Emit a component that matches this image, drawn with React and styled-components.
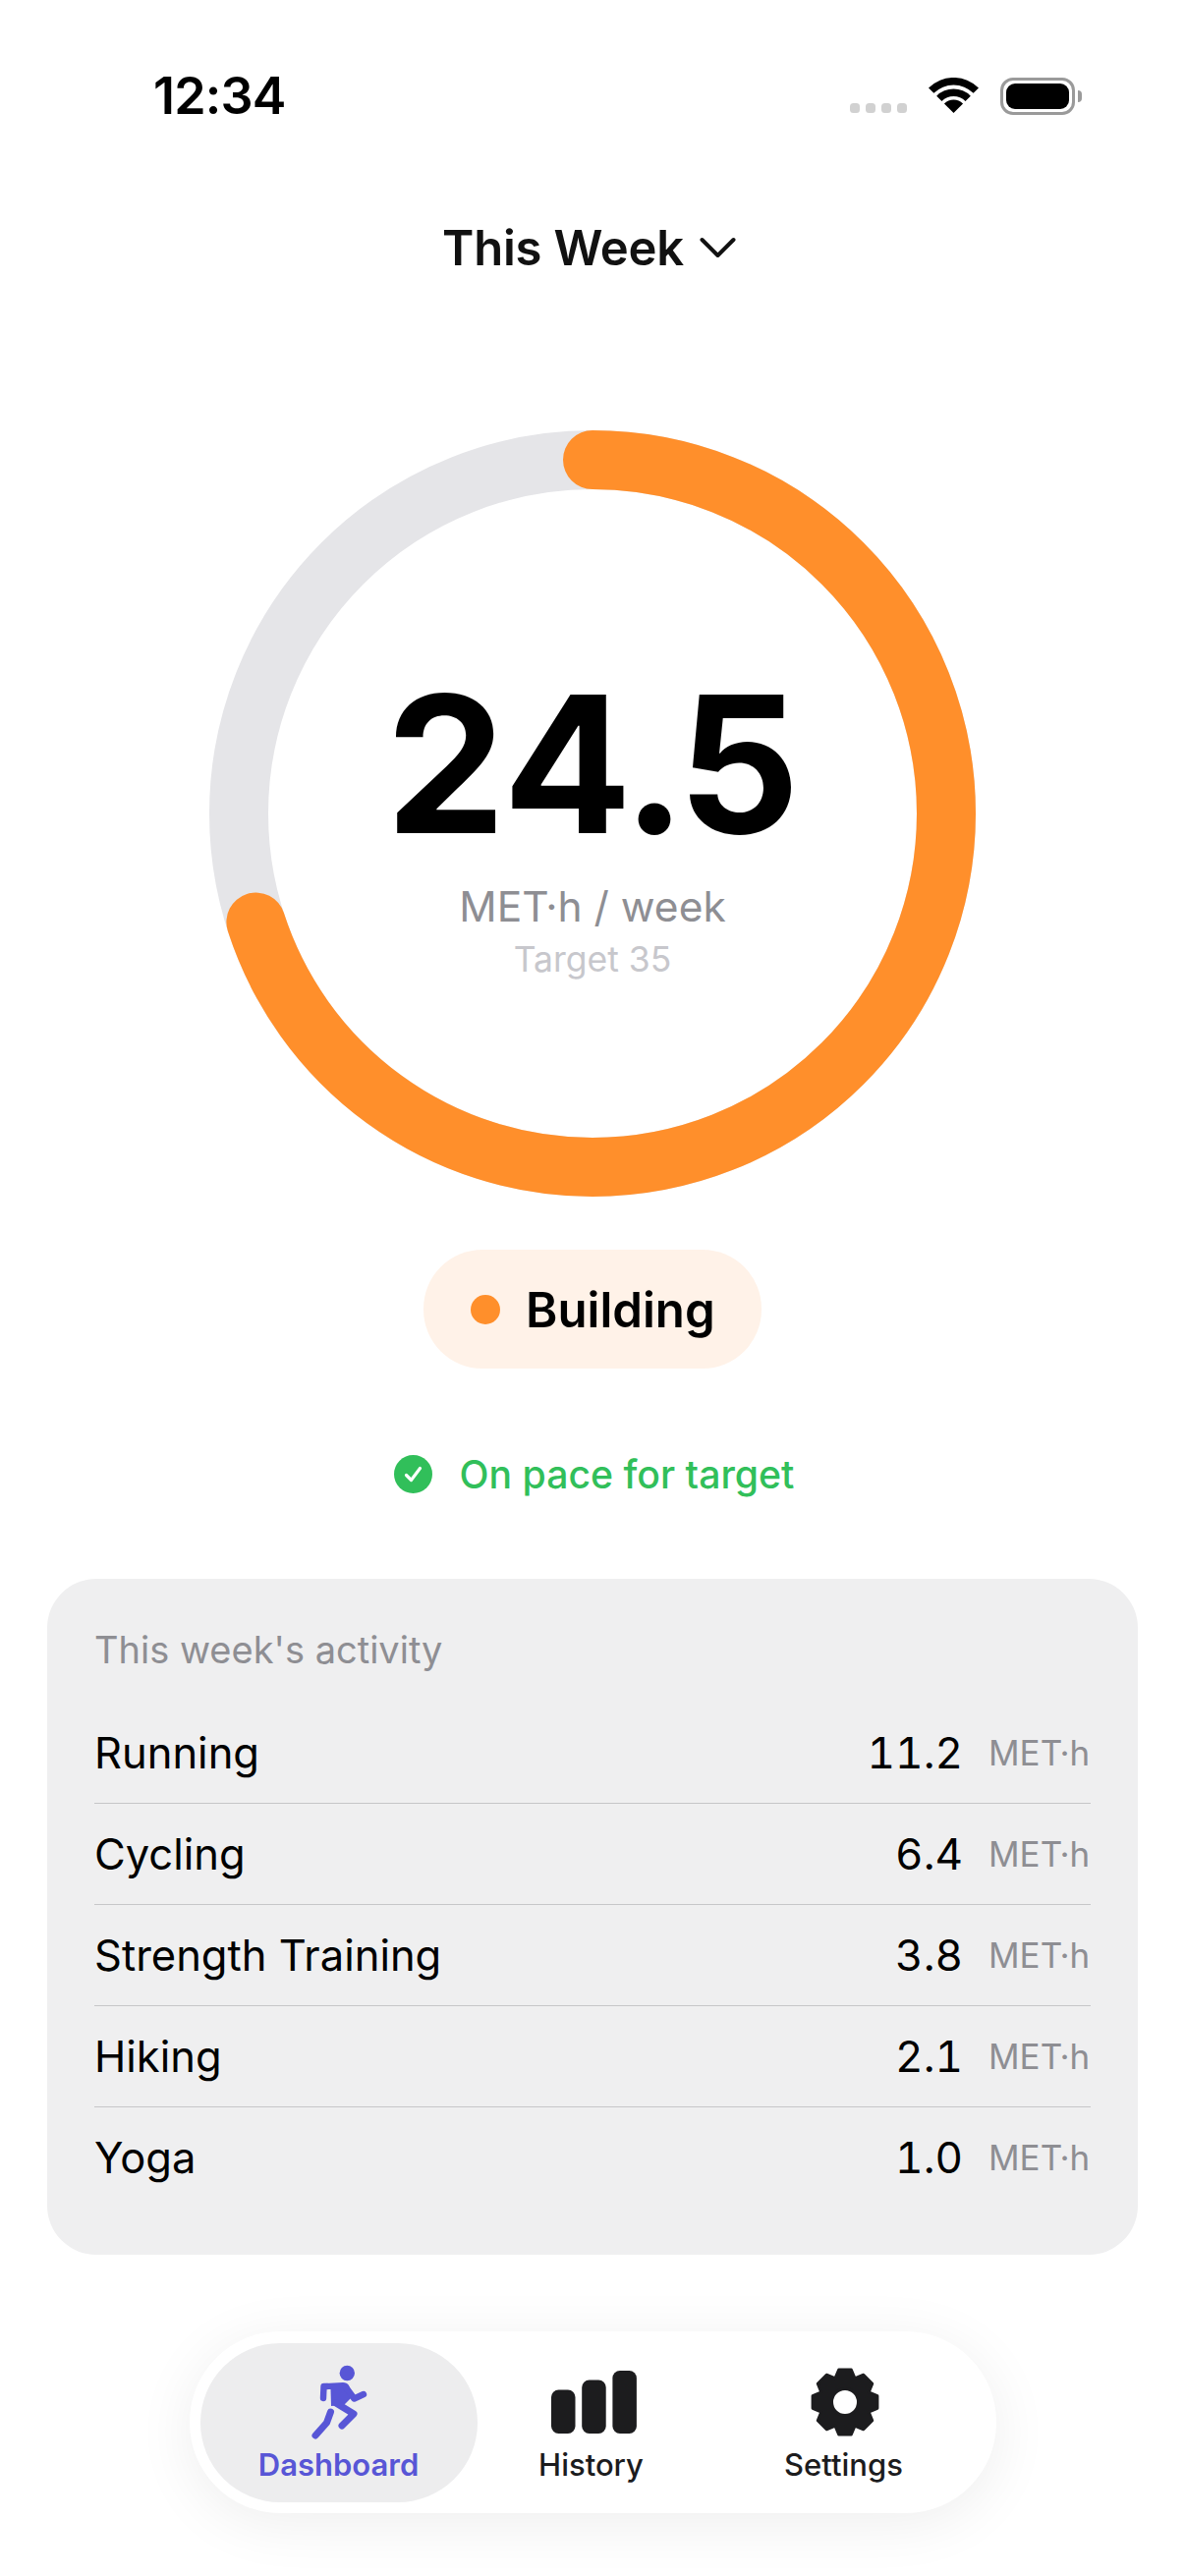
import React from 'react'
import styled, { createGlobalStyle } from 'styled-components'

const ORANGE = '#FF8F2B'
const RING_RADIUS = 360
const RING_STROKE = 60

const activities = [
  { name: 'Running', value: '11.2' },
  { name: 'Cycling', value: '6.4' },
  { name: 'Strength Training', value: '3.8' },
  { name: 'Hiking', value: '2.1' },
  { name: 'Yoga', value: '1.0' },
]

const GlobalStyle = createGlobalStyle`
  html, body {
    margin: 0;
    background: #fff;
  }
  body {
    font-family: Inter, "Noto Sans", "Liberation Sans", sans-serif;
    color: #000;
    -webkit-font-smoothing: antialiased;
  }
`

// eight teeth around the hub, first one pointing straight up
const buildGearPath = () => {
  const point = (radius, angle) => {
    const x = 36 + radius * Math.sin(angle)
    const y = 36 - radius * Math.cos(angle)
    return `${x.toFixed(2)} ${y.toFixed(2)}`
  }
  const step = Math.PI / 4
  let d = ''
  for (let i = 0; i < 8; i++) {
    const a = i * step
    d += `${i === 0 ? 'M' : 'L'}${point(26, a - 0.4)} `
    d += `L${point(33.5, a - 0.19)} L${point(33.5, a + 0.19)} L${point(26, a + 0.4)} `
  }
  return `${d}Z M36 22.5 A13.5 13.5 0 1 0 36 49.5 A13.5 13.5 0 1 0 36 22.5 Z`
}

const WifiIcon = () => (
  <svg width="51" height="36" viewBox="0 0 51 36" fill="#000">
    <path d="M0 10.54 A36 36 0 0 1 51 10.54 L45.65 15.85 A28.5 28.5 0 0 0 5.35 15.85 Z" />
    <path d="M8.18 18.68 A24.5 24.5 0 0 1 42.82 18.68 L37.52 23.98 A17 17 0 0 0 13.48 23.98 Z" />
    <path d="M15.95 26.45 A13.5 13.5 0 0 1 35.05 26.45 L25.5 36 Z" />
  </svg>
)

const ChevronIcon = () => (
  <svg width="37" height="22" viewBox="0 0 37 22" fill="none">
    <path d="M2.5 3 L18.5 19 L34.5 3" stroke="#111" strokeWidth="4" strokeLinecap="round" strokeLinejoin="round" />
  </svg>
)

const CheckIcon = () => (
  <svg width="39" height="39" viewBox="0 0 39 39">
    <circle cx="19.5" cy="19.5" r="19.5" fill="#31BF5A" />
    <path d="M12.5 20.5 L17.5 25.5 L26.5 13.5" fill="none" stroke="#fff" strokeWidth="3.2" strokeLinecap="round" strokeLinejoin="round" />
  </svg>
)

const RunnerIcon = () => (
  <svg width="60" height="80" viewBox="15 10 60 80" fill="#5856D6">
    <circle cx="53.3" cy="20.5" r="7.7" />
    <path d="M31 31 L49 30 Q53 30 55 33 L59 44 L50 53 L37 54 L36.5 37 L31 37 Z" />
    <g fill="none" stroke="#5856D6" strokeLinecap="round" strokeLinejoin="round">
      <path d="M33 34 L29.5 34 L29 46" strokeWidth="6.4" />
      <path d="M52 35 L60.5 46.5 L70 42" strokeWidth="6.4" />
      <path d="M42 51 L60 62 L48 74" strokeWidth="7" />
      <path d="M36.5 60 L32.5 71 L21 84" strokeWidth="7" />
    </g>
  </svg>
)

const BarsIcon = () => (
  <svg width="92" height="64" viewBox="-5 0 92 64" fill="#1C1C1E">
    <rect x="0" y="19.5" width="24.5" height="44.5" rx="7.5" />
    <rect x="31.2" y="9.5" width="24.5" height="54.5" rx="7.5" />
    <rect x="62.4" y="0" width="24.5" height="64" rx="7.5" />
  </svg>
)

const GearIcon = () => (
  <svg width="75" height="72" viewBox="-3 0 75 72">
    <path d={buildGearPath()} fill="#1C1C1E" fillRule="evenodd" stroke="#1C1C1E" strokeWidth="3" strokeLinejoin="round" />
  </svg>
)

const tabs = [
  { label: 'Dashboard', Icon: RunnerIcon, active: true },
  { label: 'History', Icon: BarsIcon },
  { label: 'Settings', Icon: GearIcon },
]

const App = () => {
  const circumference = 2 * Math.PI * RING_RADIUS

  return (
    <Screen>
      <GlobalStyle />
      <StatusBar>
        <Clock>12:34</Clock>
        <StatusIcons>
          <SignalDots>
            <i />
            <i />
            <i />
            <i />
          </SignalDots>
          <WifiIcon />
          <Battery>
            <BatteryFill />
          </Battery>
        </StatusIcons>
      </StatusBar>

      <PeriodPicker>
        This Week
        <ChevronIcon />
      </PeriodPicker>

      <Ring>
        <RingSvg width="780" height="780" viewBox="0 0 780 780">
          <circle cx="390" cy="390" r={RING_RADIUS} fill="none" stroke="#E5E5E8" strokeWidth={RING_STROKE} />
          <circle
            cx="390"
            cy="390"
            r={RING_RADIUS}
            fill="none"
            stroke={ORANGE}
            strokeWidth={RING_STROKE}
            strokeLinecap="round"
            strokeDasharray={`${circumference * 0.7} ${circumference}`}
            transform="rotate(-90 390 390)"
          />
        </RingSvg>
        <RingLabel>
          <Score>24.5</Score>
          <ScoreUnit>MET·h / week</ScoreUnit>
          <ScoreTarget>Target 35</ScoreTarget>
        </RingLabel>
      </Ring>

      <StatusPill>
        <PillDot />
        Building
      </StatusPill>

      <PaceNote>
        <CheckIcon />
        On pace for target
      </PaceNote>

      <ActivityCard>
        <CardTitle>This week's activity</CardTitle>
        {activities.map((activity) => (
          <ActivityRow key={activity.name}>
            <ActivityName>{activity.name}</ActivityName>
            <ActivityValue>{activity.value}</ActivityValue>
            <ActivityUnit>MET·h</ActivityUnit>
          </ActivityRow>
        ))}
      </ActivityCard>

      <TabBar>
        {tabs.map(({ label, Icon, active }) => (
          <Tab key={label} $active={active}>
            <TabIcon>
              <Icon />
            </TabIcon>
            <TabLabel $active={active}>{label}</TabLabel>
          </Tab>
        ))}
      </TabBar>
    </Screen>
  )
}

const Screen = styled.div`
  width: 1206px;
  height: 2622px;
  display: flex;
  flex-direction: column;
  align-items: center;
  overflow: hidden;
  background: #fff;
`

const StatusBar = styled.header`
  width: 100%;
  box-sizing: border-box;
  height: 60px;
  margin-top: 68px;
  padding: 0 112px 0 156px;
  display: flex;
  align-items: center;
  justify-content: space-between;
`

const Clock = styled.span`
  font-size: 52px;
  font-weight: 600;
  line-height: 60px;
  letter-spacing: -0.8px;
`

const StatusIcons = styled.div`
  display: flex;
  align-items: flex-end;
  gap: 22px;
  height: 40px;
  padding-bottom: 3px;
  box-sizing: border-box;
`

const SignalDots = styled.div`
  display: flex;
  gap: 6px;
  i {
    width: 10px;
    height: 10px;
    border-radius: 3.5px;
    background: #d1d1d1;
  }
`

const Battery = styled.div`
  position: relative;
  width: 76px;
  height: 38px;
  box-sizing: border-box;
  border: 3px solid #9a9a9a;
  border-radius: 13px;
  padding: 3px;
  margin-bottom: -2px;

  &::after {
    content: '';
    position: absolute;
    right: -10px;
    top: 10px;
    width: 4px;
    height: 12px;
    background: #9a9a9a;
    border-radius: 0 6px 6px 0;
  }
`

const BatteryFill = styled.div`
  width: 100%;
  height: 100%;
  background: #000;
  border-radius: 9px;
`

const PeriodPicker = styled.div`
  height: 60px;
  margin-top: 94px;
  padding-right: 7px;
  display: flex;
  align-items: center;
  gap: 16px;
  font-size: 49px;
  font-weight: 600;
  letter-spacing: -0.2px;
  color: #111;
`

const Ring = styled.div`
  width: 780px;
  height: 780px;
  margin-top: 156px;
  display: grid;
  flex-shrink: 0;
`

const RingSvg = styled.svg`
  grid-area: 1 / 1;
`

const RingLabel = styled.div`
  grid-area: 1 / 1;
  display: flex;
  flex-direction: column;
  align-items: center;
  padding-top: 224px;
`

const Score = styled.div`
  font-size: 194px;
  font-weight: 700;
  line-height: 232px;
  letter-spacing: -1px;
  color: #000;
  font-variant-numeric: tabular-nums;
`

const ScoreUnit = styled.div`
  font-size: 42.5px;
  line-height: 52px;
  color: #8e8e93;
  margin-top: 3px;
`

const ScoreTarget = styled.div`
  font-size: 35.5px;
  line-height: 44px;
  color: #c7c7cc;
  margin-top: 6px;
`

const StatusPill = styled.div`
  width: 344px;
  height: 121px;
  margin-top: 54px;
  padding-left: 48px;
  box-sizing: border-box;
  display: flex;
  align-items: center;
  gap: 26px;
  flex-shrink: 0;
  border-radius: 60px;
  background: #fff2e8;
  font-size: 49.2px;
  font-weight: 600;
`

const PillDot = styled.span`
  width: 30px;
  height: 30px;
  border-radius: 50%;
  background: ${ORANGE};
`

const PaceNote = styled.div`
  height: 40px;
  margin-top: 87px;
  padding-left: 3px;
  display: flex;
  align-items: center;
  gap: 28px;
  font-size: 39.2px;
  font-weight: 500;
  color: #31bf5a;
`

const ActivityCard = styled.section`
  width: 1110px;
  height: 688px;
  margin-top: 87px;
  box-sizing: border-box;
  padding: 48px 48px 47px;
  flex-shrink: 0;
  border-radius: 50px;
  background: #efeff0;
`

const CardTitle = styled.h2`
  margin: 0 0 30px;
  height: 48px;
  font-size: 38px;
  line-height: 48px;
  font-weight: 400;
  color: #8e8e93;
`

const ActivityRow = styled.div`
  height: 102px;
  box-sizing: border-box;
  display: flex;
  align-items: center;

  & + & {
    border-top: 1px solid #c6c6c8;
    height: 103px;
  }
`

const ActivityName = styled.span`
  flex: 1;
  font-size: 43.5px;
  color: #000;
`

const ActivityValue = styled.span`
  font-size: 44px;
  color: #000;
  font-variant-numeric: tabular-nums;
`

const ActivityUnit = styled.span`
  width: 104px;
  margin-left: 26px;
  font-size: 35px;
  color: #8e8e93;
`

const TabBar = styled.nav`
  width: 821px;
  height: 185px;
  margin-top: 78px;
  box-sizing: border-box;
  padding: 12px 14px 11px 11px;
  display: flex;
  flex-shrink: 0;
  border-radius: 92px;
  background: #fff;
  box-shadow: 0 10px 60px rgba(0, 0, 0, 0.07);
`

const Tab = styled.div`
  width: 282px;
  height: 162px;
  box-sizing: border-box;
  padding-top: 20px;
  display: flex;
  flex-direction: column;
  align-items: center;
  border-radius: 81px;
  background: ${({ $active }) => ($active ? '#ededee' : 'transparent')};

  & + & {
    margin-left: -25px;
  }
`

const TabIcon = styled.div`
  height: 80px;
  display: flex;
  align-items: center;
  justify-content: center;
`

const TabLabel = styled.span`
  margin-top: 6px;
  font-size: 31px;
  line-height: 36px;
  font-weight: ${({ $active }) => ($active ? 600 : 500)};
  color: ${({ $active }) => ($active ? '#5856D6' : '#1C1C1E')};
`

export default App
